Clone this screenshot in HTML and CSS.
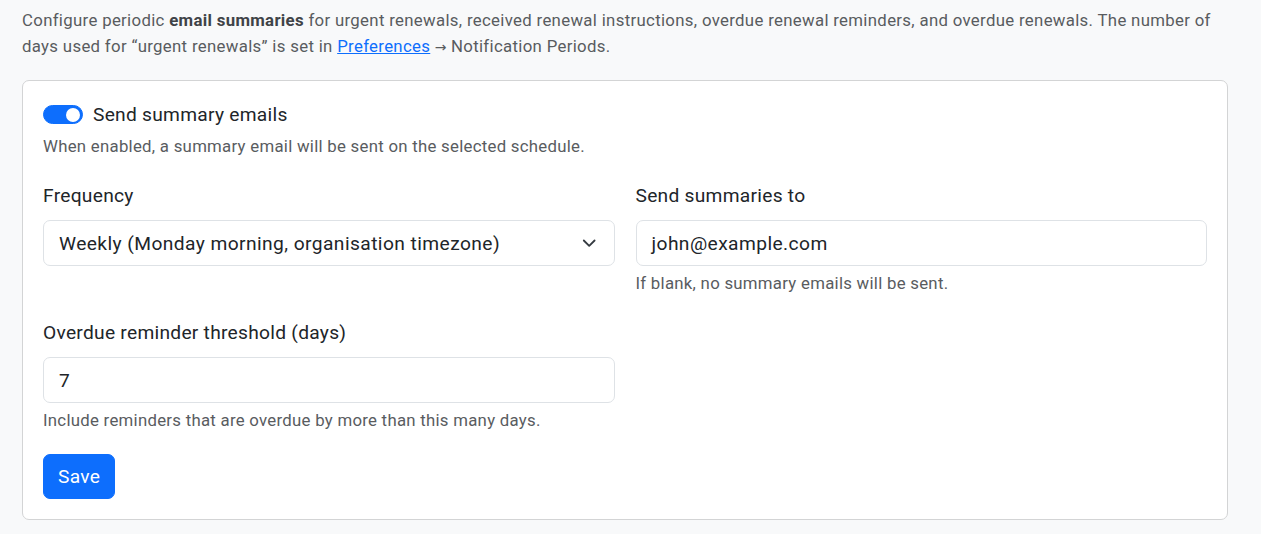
FILE: index.html
```html
<!DOCTYPE html>
<html lang="en">
<head>
<meta charset="utf-8">
<title>Email summaries</title>
<link rel="stylesheet" href="styles.css">
</head>
<body>
<main class="page">
  <p class="intro">Configure periodic <strong>email summaries</strong> for urgent renewals, received renewal instructions, overdue renewal reminders, and overdue renewals. The number of days used for “urgent renewals” is set in <a href="#" class="link">Preferences</a> <span class="arrow">→</span> Notification Periods.</p>

  <form class="card">
    <div class="switch-block">
      <label class="switch">
        <span class="switch-track"><span class="switch-knob"></span></span>
        <span class="switch-label">Send summary emails</span>
      </label>
      <div class="form-text">When enabled, a summary email will be sent on the selected schedule.</div>
    </div>

    <div class="fields">
      <div class="field">
        <label class="field-label">Frequency</label>
        <div class="control select">
          <span>Weekly (Monday morning, organisation timezone)</span>
          <svg class="chevron" viewBox="0 0 16 16" aria-hidden="true"><path d="m2 5 6 6 6-6" fill="none" stroke="#343a40" stroke-width="2" stroke-linecap="round" stroke-linejoin="round"/></svg>
        </div>
      </div>
      <div class="field">
        <label class="field-label">Send summaries to</label>
        <div class="control">john@example.com</div>
        <div class="form-text">If blank, no summary emails will be sent.</div>
      </div>
      <div class="field">
        <label class="field-label">Overdue reminder threshold (days)</label>
        <div class="control">7</div>
        <div class="form-text">Include reminders that are overdue by more than this many days.</div>
      </div>
    </div>

    <div class="actions">
      <button type="button" class="btn-primary">Save</button>
    </div>
  </form>
</main>
</body>
</html>
```

FILE: styles.css
```css
html, body {
  margin: 0;
  padding: 0;
}

body {
  background: #f8f9fa;
  color: #212529;
  font-family: "Segoe UI", Roboto, "Noto Sans", "Liberation Sans", sans-serif;
  font-size: 19.2px;
  line-height: 1.5;
  letter-spacing: 0.014em;
}

.page {
  width: 1206px;
  margin-left: 22px;
  padding-top: 7px;
}

.intro {
  margin: 0 0 21px 0;
  font-size: 16.8px;
  line-height: 26px;
  letter-spacing: 0.019em;
  color: #595c5f;
}

.intro strong {
  font-weight: 700;
  color: #3f4347;
}

.arrow {
  font-family: "DejaVu Sans", sans-serif;
  font-size: 14px;
  line-height: 0;
  letter-spacing: 0;
}

.link {
  color: #0d6efd;
  text-decoration: underline;
}

.card {
  background: #fff;
  border: 1px solid #d3d4d5;
  border-radius: 7px;
  padding: 19px 20px 20px 20px;
  display: flex;
  flex-direction: column;
}

.switch {
  display: flex;
  align-items: flex-start;
  gap: 10px;
  min-height: 29px;
}

.switch-track {
  flex: none;
  box-sizing: content-box;
  width: 34px;
  height: 17px;
  margin-top: 5px;
  padding: 0 2px;
  border: 1px solid #0d6efd;
  background: #0d6efd;
  border-radius: 12px;
  display: flex;
  align-items: center;
  justify-content: flex-end;
}

.switch-knob {
  width: 14px;
  height: 14px;
  border-radius: 50%;
  background: #fff;
}

.switch-label {
  font-size: 19.2px;
  line-height: 29px;
}

.form-text {
  margin-top: 5px;
  font-size: 16.8px;
  line-height: 25px;
  color: #595c5f;
}

.fields {
  margin-top: 22px;
  display: grid;
  grid-template-columns: 1fr 1fr;
  column-gap: 21px;
  row-gap: 22px;
}

.field-label {
  display: block;
  margin-bottom: 10px;
  line-height: 29px;
}

.control {
  height: 44px;
  border: 1px solid #dee2e6;
  border-radius: 7px;
  padding: 0 15px;
  display: flex;
  align-items: center;
  background: #fff;
  line-height: 29px;
  letter-spacing: 0.022em;
}

.select {
  justify-content: space-between;
}

.chevron {
  width: 14.4px;
  height: 14.4px;
  flex: none;
  margin-right: 2.4px;
}

.actions {
  margin-top: 21px;
  display: flex;
}

.btn-primary {
  font-family: inherit;
  font-size: 19.2px;
  line-height: 29px;
  letter-spacing: 0.014em;
  color: #fff;
  background: #0d6efd;
  border: 1px solid #0d6efd;
  border-radius: 7px;
  padding: 7px 14px;
  cursor: pointer;
}
```
